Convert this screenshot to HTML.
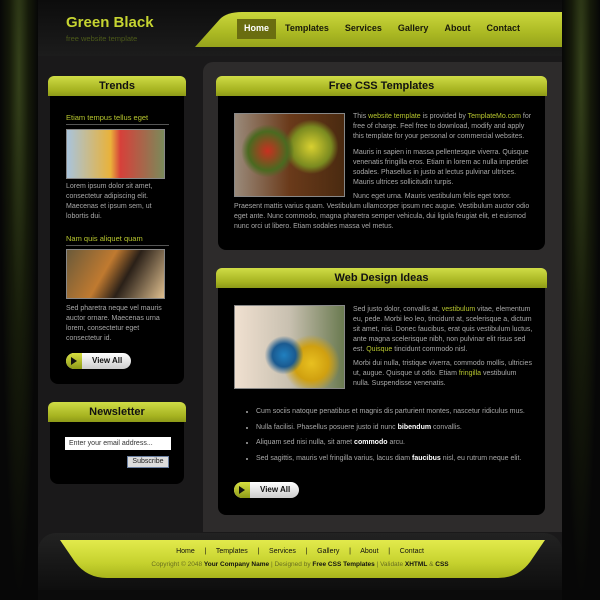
<!DOCTYPE html>
<html><head><style>
*{margin:0;padding:0;box-sizing:border-box}
body{width:600px;height:600px;background:#0b0b0b;font-family:"Liberation Sans",sans-serif;position:relative;overflow:hidden;font-size:7px;color:#aaa}
.side{position:absolute;top:0;width:38px;height:600px;background:radial-gradient(ellipse at 50% 12%,#34401a 0%,#161b0a 35%,#070707 70%)}
.wrap{position:absolute;left:38px;top:0;width:524px;height:590px;background:#1a191a}
.hdr{position:absolute;left:0;top:0;width:524px;height:56px;background:linear-gradient(#0c0c0c,#1c1c1c)}
.logo{position:absolute;left:28px;top:14px;color:#c6d431;font-size:15px;font-weight:bold}
.tag{position:absolute;left:28px;top:34px;color:#4c5a1a;font-size:7.5px}
.navt{position:absolute;top:19px;height:20px;display:flex;font-size:9px;font-weight:bold;color:#1a1a0a}
.navt span{padding:4px 7px;margin-right:2px}
.navt .on{background:#6a6d10;color:#fff}
.right{position:absolute;left:165px;top:62px;width:359px;height:470px;background:#2d2b2b;border-top-left-radius:10px}
.box{position:absolute;background:#000;border-radius:8px}
.tb{position:absolute;left:-2px;right:-2px;top:0;height:20px;background:linear-gradient(#cfdc46,#a6b320 70%,#8d9a18);border-radius:6px 6px 0 0;text-align:center;font-weight:bold;color:#111;font-size:11px;line-height:20px}
.p{position:absolute;font-size:7px;line-height:10px;color:#a8a8a8}
.g{color:#b7c62e}
.b{color:#fff;font-weight:bold}
.btn{position:absolute;width:65px;height:16px;border-radius:8px;background:linear-gradient(#fff,#ccc);font-weight:bold;font-size:8px;color:#111;line-height:16px;padding-left:26px}
.btn:before{content:"";position:absolute;left:0;top:0;width:16px;height:16px;border-radius:8px 0 0 8px;background:linear-gradient(#d8e040,#8d9a18)}
.btn:after{content:"";position:absolute;left:5px;top:4px;border-left:6px solid #111;border-top:4px solid transparent;border-bottom:4px solid transparent}
.ft{position:absolute;left:0;width:600px;text-align:center;font-size:7px;color:#111}
.img{position:absolute;border:1px solid #888}
</style></head><body>
<div class="side" style="left:0"></div><div class="side" style="right:0"></div>
<div class="wrap">
<div class="hdr"></div>
<div class="logo">Green Black</div><div class="tag">free website template</div>
<div class="right"></div>
</div>
<svg style="position:absolute;left:150px;top:0" width="412" height="60"><defs><linearGradient id="ng" x1="0" y1="0" x2="0" y2="1"><stop offset="0" stop-color="#cbd73c"/><stop offset=".6" stop-color="#abb923"/><stop offset="1" stop-color="#96a31b"/></linearGradient></defs>
<path d="M45 47 L70 19 Q77 12 92 12 L412 12 L412 47 Z" fill="url(#ng)"/></svg>
<div class="navt" style="left:237px"><span class="on">Home</span><span>Templates</span><span>Services</span><span>Gallery</span><span>About</span><span>Contact</span></div>

<div class="box" style="left:50px;top:76px;width:134px;height:308px"><div class="tb">Trends</div></div>
<div class="p g" style="left:66px;top:113px;font-size:7.5px">Etiam tempus tellus eget</div>
<div style="position:absolute;left:66px;top:124px;width:103px;height:1px;background:#555"></div>
<div class="img" style="left:66px;top:129px;width:99px;height:50px;background:linear-gradient(90deg,#a9c4dc,#e9b23a 45%,#d7403a 55%,#7a8a5a)"></div>
<div class="p" style="left:66px;top:182px;width:110px">Lorem ipsum dolor sit amet, consectetur adipiscing elit. Maecenas et ipsum sem, ut lobortis dui.</div>
<div class="p g" style="left:66px;top:234px;font-size:7.5px">Nam quis aliquet quam</div>
<div style="position:absolute;left:66px;top:245px;width:103px;height:1px;background:#555"></div>
<div class="img" style="left:66px;top:249px;width:99px;height:50px;background:linear-gradient(120deg,#6b5a3a,#c07a30 40%,#2a2018 60%,#e0c090)"></div>
<div class="p" style="left:66px;top:304px;width:110px">Sed pharetra neque vel mauris auctor ornare. Maecenas urna lorem, consectetur eget consectetur id.</div>
<div class="btn" style="left:66px;top:353px">View All</div>

<div class="box" style="left:50px;top:402px;width:134px;height:82px"><div class="tb">Newsletter</div></div>
<div style="position:absolute;left:65px;top:437px;width:106px;height:13px;background:#fff;font-size:7px;color:#333;line-height:13px;padding-left:4px">Enter your email address...</div>
<div style="position:absolute;left:127px;top:456px;width:42px;height:12px;background:#ddd;border:1px solid #6a7fa0;font-size:7px;color:#222;line-height:10px;text-align:center">Subscribe</div>

<div class="box" style="left:218px;top:76px;width:327px;height:174px"><div class="tb">Free CSS Templates</div></div>
<div class="img" style="left:234px;top:113px;width:111px;height:84px;background:radial-gradient(circle at 30% 45%,#c83020 0,#4a6a20 22%,transparent 30%),radial-gradient(circle at 70% 40%,#d8d030 0,#7a8a20 22%,transparent 30%),linear-gradient(90deg,#9a8a7a,#6a3a1a 50%,#4a2a10)"></div>
<div class="p" style="left:353px;top:112px;width:180px">This <span class="g">website template</span> is provided by <span class="g">TemplateMo.com</span> for free of charge. Feel free to download, modify and apply this template for your personal or commercial websites.</div>
<div class="p" style="left:353px;top:148px;width:180px">Mauris in sapien in massa pellentesque viverra. Quisque venenatis fringilla eros. Etiam in lorem ac nulla imperdiet sodales. Phasellus in justo at lectus pulvinar ultrices. Mauris ultrices sollicitudin turpis.</div>
<div class="p" style="left:353px;top:192px;width:180px">Nunc eget urna. Mauris vestibulum felis eget tortor.</div>
<div class="p" style="left:234px;top:202px;width:300px">Praesent mattis varius quam. Vestibulum ullamcorper ipsum nec augue. Vestibulum auctor odio eget ante. Nunc commodo, magna pharetra semper vehicula, dui ligula feugiat elit, et euismod nunc orci ut libero. Etiam sodales massa vel metus.</div>

<div class="box" style="left:218px;top:268px;width:327px;height:247px"><div class="tb">Web Design Ideas</div></div>
<div class="img" style="left:234px;top:305px;width:111px;height:84px;background:radial-gradient(circle at 45% 60%,#2080c0 0,#1a5a90 15%,transparent 25%),radial-gradient(circle at 70% 70%,#e8c020 0,#d0a010 18%,transparent 30%),linear-gradient(90deg,#f0e0d0,#c8c0b0 50%,#6a7a50)"></div>
<div class="p" style="left:353px;top:305px;width:180px">Sed justo dolor, convallis at, <span class="g">vestibulum</span> vitae, elementum eu, pede. Morbi leo leo, tincidunt at, scelerisque a, dictum sit amet, nisi. Donec faucibus, erat quis vestibulum luctus, ante magna scelerisque nibh, non pulvinar elit risus sed est. <span class="g">Quisque</span> tincidunt commodo nisl.</div>
<div class="p" style="left:353px;top:359px;width:180px">Morbi dui nulla, tristique viverra, commodo mollis, ultricies ut, augue. Quisque ut odio. Etiam <span class="g">fringilla</span> vestibulum nulla. Suspendisse venenatis.</div>
<ul class="p" style="left:256px;top:404px;width:290px;list-style:disc;line-height:15.5px">
<li>Cum sociis natoque penatibus et magnis dis parturient montes, nascetur ridiculus mus.</li>
<li>Nulla facilisi. Phasellus posuere justo id nunc <span class="b">bibendum</span> convallis.</li>
<li>Aliquam sed nisi nulla, sit amet <span class="b">commodo</span> arcu.</li>
<li>Sed sagittis, mauris vel fringilla varius, lacus diam <span class="b">faucibus</span> nisl, eu rutrum neque elit.</li>
</ul>
<div class="btn" style="left:234px;top:482px">View All</div>

<div style="position:absolute;left:38px;top:533px;width:524px;height:57px;background:linear-gradient(#222,#0e0e0e);border-radius:18px 18px 0 0"></div>
<svg style="position:absolute;left:60px;top:540px" width="485" height="40"><defs><linearGradient id="fg" x1="0" y1="0" x2="0" y2="1"><stop offset="0" stop-color="#e2ea4c"/><stop offset=".6" stop-color="#c6d22e"/><stop offset="1" stop-color="#a8b41c"/></linearGradient></defs>
<path d="M0 0 L485 0 L470 22 Q458 38 438 38 L47 38 Q27 38 15 22 Z" fill="url(#fg)"/></svg>
<div class="ft" style="top:548px">Home &nbsp;&nbsp;&nbsp;&nbsp;|&nbsp;&nbsp;&nbsp;&nbsp; Templates &nbsp;&nbsp;&nbsp;&nbsp;|&nbsp;&nbsp;&nbsp;&nbsp; Services &nbsp;&nbsp;&nbsp;&nbsp;|&nbsp;&nbsp;&nbsp;&nbsp; Gallery &nbsp;&nbsp;&nbsp;&nbsp;|&nbsp;&nbsp;&nbsp;&nbsp; About &nbsp;&nbsp;&nbsp;&nbsp;|&nbsp;&nbsp;&nbsp;&nbsp; Contact</div>
<div class="ft" style="top:561px;font-size:6.5px;color:#6a7020">Copyright © 2048 <b style="color:#111">Your Company Name</b> | Designed by <b style="color:#111">Free CSS Templates</b> | Validate <b style="color:#111">XHTML</b> &amp; <b style="color:#111">CSS</b></div>
</body></html>
